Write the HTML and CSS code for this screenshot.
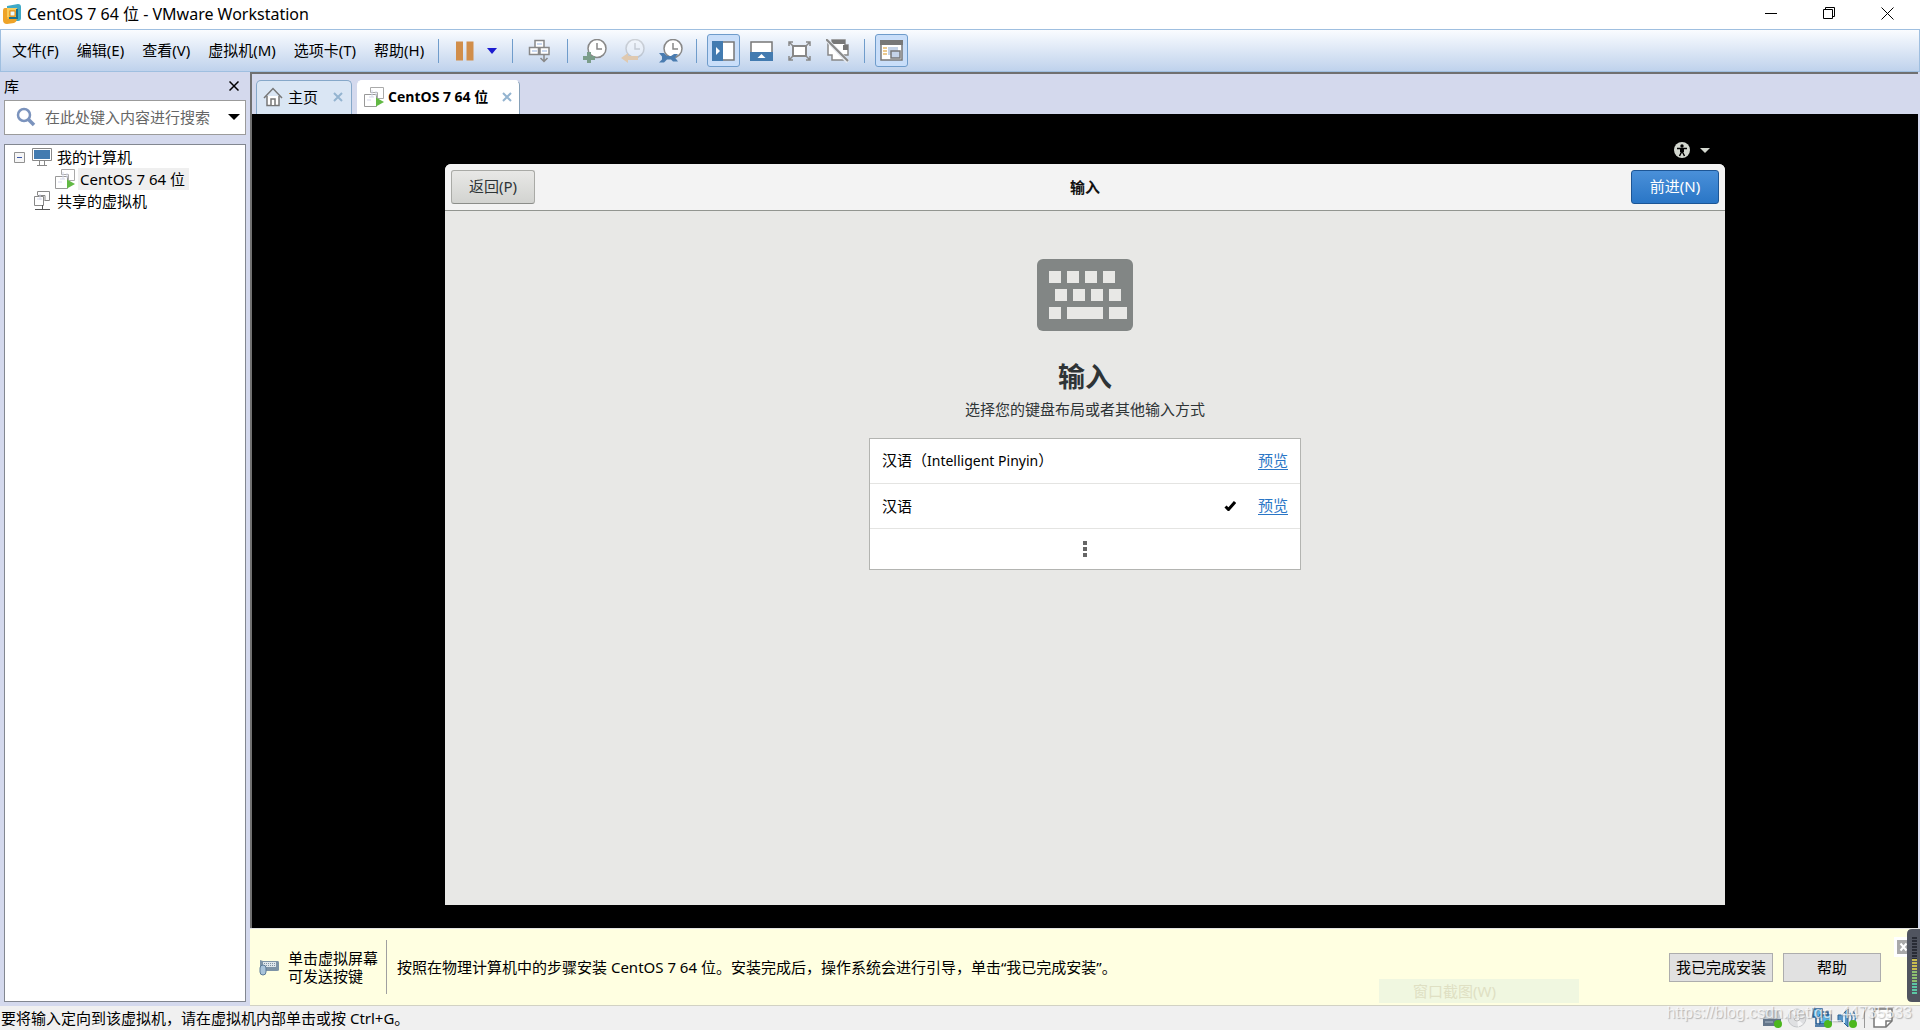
FILE: index.html
```html
<!DOCTYPE html>
<html lang="zh-CN">
<head>
<meta charset="utf-8">
<title>CentOS 7 64 位 - VMware Workstation</title>
<link rel="stylesheet" href="styles.css">
</head>
<body>
<svg width="0" height="0" class="defs" aria-hidden="true">
  <symbol id="vm-on" viewBox="0 0 20 20">
    <path d="M6.500 5.500v-5h13v11h-6" fill="#fff" stroke="#aaa"/>
    <path d="M.5 7.500h12v12H.5z" fill="#fff" stroke="#999"/>
    <path d="M6.500 5.500h7v6" fill="none" stroke="#aaa"/>
    <path d="M5 10h5M8 3v7M12 4v5M3 13h4" stroke="#d5d8ea" fill="none"/>
    <path d="M12 10.500l8 4.500-8 4.500z" fill="#62b944"/>
  </symbol>
  <symbol id="clock" viewBox="0 0 24 24">
    <circle cx="14" cy="9.500" r="9" fill="#fff" stroke="#888" stroke-width="1.500"/>
    <path d="M14 4v6h5" fill="none" stroke="#888" stroke-width="1.500"/>
  </symbol>
</svg>

<header class="titlebar">
  <svg class="logo" width="18" height="20" viewBox="0 0 18 20">
    <path d="M4 2l11-2q3 0 3 3v11q0 3-3 3H4z" fill="#3fa9c6"/>
    <path d="M2 4h3v10h9q0 4-3 5l-7 1q-4 0-4-4V7q0-3 2-3z" fill="#eea328"/>
    <path d="M4 4h10v11H4z" fill="#f5b63f"/>
    <path d="M5 13V5h9" fill="none" stroke="#f9cd5d" stroke-width="2"/>
    <path d="M14 5v9H6" fill="none" stroke="#19708f" stroke-width="2"/>
    <path d="M7 7h5v5H7z" fill="#e9fbff" stroke="#e18a18"/>
  </svg>
  <h1>CentOS 7 64 位 - VMware Workstation</h1>
  <div class="window-buttons">
    <button type="button" aria-label="最小化"><svg width="13" height="13"><path d="M0 6.500h12" stroke="#000"/></svg></button>
    <button type="button" aria-label="还原"><svg width="13" height="13" fill="none" stroke="#000"><path d="M.5 2.500h9v9h-9zM2.500 2.500v-2h9v9h-2"/></svg></button>
    <button type="button" aria-label="关闭"><svg width="13" height="13"><path d="M.5 .5l12 12M12.500 .5l-12 12" stroke="#000"/></svg></button>
  </div>
</header>

<nav class="menubar">
  <div class="menus">
    <button type="button">文件(F)</button>
    <button type="button">编辑(E)</button>
    <button type="button">查看(V)</button>
    <button type="button">虚拟机(M)</button>
    <button type="button">选项卡(T)</button>
    <button type="button">帮助(H)</button>
  </div>
  <div class="tools power">
    <button type="button" aria-label="挂起"><svg width="18" height="20"><path d="M0 .5h7v19H0zM10.500 .5h7v19h-7z" fill="#d18e4a"/></svg></button>
    <button type="button" aria-label="电源选项"><svg width="10" height="6"><path d="M0 0h10L5 6z" fill="#1b1bd0"/></svg></button>
  </div>
  <div class="tools">
    <button type="button" aria-label="发送按键"><svg width="24" height="24" viewBox="0 0 24 24" stroke="#888" stroke-width="1.500" fill="#fff"><path d="M7 1.500h9v7H7zM1.500 8.500h9v7h-9zM12 8.500h9v7h-9z"/><path d="M9 5h5M4 12h5M14 12h5" stroke="#b9cdec"/><path d="M16 15v7M12.500 19l3.500 3.500 3.500-3.500" fill="none"/></svg></button>
  </div>
  <div class="tools snap">
    <button type="button" aria-label="拍摄快照"><svg width="24" height="24"><use href="#clock"/><path d="M4 13h4v4h4v4H8v4H4v-4H0v-4h4z" fill="#7b9d8a"/></svg></button>
    <button type="button" aria-label="恢复快照"><svg width="24" height="24"><use href="#clock" opacity=".3"/><path d="M0 19l7-5v3h10v4H7v3z" fill="#dfc9b0"/></svg></button>
    <button type="button" aria-label="管理快照"><svg width="24" height="24"><use href="#clock"/><path d="M0 14h5l3 3h4l3-2h4l-3 3.500 3 4h-5l-2-2H8l-3 3H0l3-3v-3z" fill="#4a7cb0"/></svg></button>
  </div>
  <div class="tools view">
    <button type="button" class="pressed" aria-label="显示库"><svg width="24" height="20"><path d="M1 1h21v18H1z" fill="#fff" stroke="#777" stroke-width="1.500"/><path d="M0 0h11v20H0z" fill="#437bb0"/><path d="M4 6l4 4-4 4z" fill="#fff"/></svg></button>
    <button type="button" aria-label="显示缩略图"><svg width="24" height="20"><path d="M1 1h21v18H1z" fill="#fff" stroke="#777" stroke-width="1.500"/><path d="M0 11h23v9H0z" fill="#437bb0"/><path d="M7.500 17l4-4 4 4z" fill="#fff"/></svg></button>
    <button type="button" aria-label="全屏"><svg width="24" height="20" fill="none" stroke="#888" stroke-width="1.500"><path d="M5 5h13v10H5z" fill="#fff" stroke-width="2"/><path d="M1 5V1h4M18 1h4v4M22 15v4h-4M5 19H1v-4M1 1l4 4M22 1l-4 4M22 19l-4-4M1 19l4-4"/></svg></button>
    <button type="button" aria-label="Unity"><svg width="24" height="24"><path d="M6 1h13v5h3v10h-4v5H6V16H2V4h4z" fill="#fff" stroke="#888" stroke-width="1.500"/><path d="M6 1h13v4H6zM17 6h5v5h-5z" fill="#777"/><path d="M1 1l21 22" stroke="#e5e9ef" stroke-width="4"/><path d="M0 0l22 22" stroke="#888" stroke-width="2"/></svg></button>
  </div>
  <div class="tools">
    <button type="button" class="pressed" aria-label="控制台视图"><svg width="24" height="22"><path d="M1 1h21v19H1z" fill="#fff" stroke="#777" stroke-width="1.500"/><path d="M0 0h23v5H0z" fill="#777"/><path d="M3 8h4M3 11h4M3 14h4" stroke="#e6b96b" stroke-width="1.500"/><path d="M8 7h10v8H8z" fill="#c5d3e8"/><path d="M11 11h9v7h-9z" fill="#c5d3e8" stroke="#777" stroke-width="1.500"/></svg></button>
  </div>
</nav>

<main class="workspace">
  <aside class="library">
    <div class="library-head">
      <h2>库</h2>
      <button type="button" aria-label="关闭库"><svg width="10" height="10"><path d="M.5 .5l9 9M9.500 .5l-9 9" stroke="#000" stroke-width="1.500"/></svg></button>
    </div>
    <label class="search">
      <svg width="20" height="20" fill="none"><circle cx="8" cy="8" r="6" stroke="#7b93bd" stroke-width="2.500"/><path d="M12 12l6 6" stroke="#7b93bd" stroke-width="3.500"/></svg>
      <input type="text" placeholder="在此处键入内容进行搜索" aria-label="搜索">
      <svg width="12" height="6"><path d="M0 0h12L6 6z" fill="#000"/></svg>
    </label>
    <ul class="tree">
      <li>
        <button type="button" class="twisty" aria-label="折叠"><svg width="11" height="11"><path d="M.5 .5h10v10H.5z" fill="#f6f6f6" stroke="#919191"/><path d="M3 5.500h5" stroke="#3b56a8"/></svg></button>
        <svg width="20" height="20"><path d="M.5 1.500h19v12H.5z" fill="#fff" stroke="#888"/><path d="M2 3h16v9H2z" fill="#437bb0"/><path d="M7.500 14v4M12.500 14v4M5 18.500h10" stroke="#888"/></svg>
        <span>我的计算机</span>
      </li>
      <li class="child">
        <svg width="20" height="20"><use href="#vm-on"/></svg>
        <span class="selected">CentOS 7 64 位</span>
      </li>
      <li class="shared">
        <svg width="20" height="20" fill="none"><path d="M5.500 4.500v-4h12v9h-5M2.500 5.500h9v9h-9zM6 4.500h7v5" stroke="#888"/><path d="M5 8h5M8 3v6" stroke="#d5d8ea"/><path d="M10.500 14v4M3 18.500h15" stroke="#555"/></svg>
        <span>共享的虚拟机</span>
      </li>
    </ul>
  </aside>

  <section class="console">
    <div class="tabs">
      <div class="tab">
        <svg width="20" height="20" fill="#fff" stroke="#777" stroke-width="1.500"><path d="M4 9v9.500h12V9"/><path d="M1 11l9-9.500 9 9.500" fill="none"/><path d="M8 18v-6h4v6"/></svg>
        <button type="button">主页</button>
        <button type="button" class="x" aria-label="关闭主页"><svg width="10" height="10"><path d="M1 1l8 8M9 1L1 9" stroke="#94b4d0" stroke-width="2"/></svg></button>
      </div>
      <div class="tab active">
        <svg width="20" height="20"><use href="#vm-on"/></svg>
        <button type="button">CentOS 7 64 位</button>
        <button type="button" class="x" aria-label="关闭虚拟机"><svg width="10" height="10"><path d="M1 1l8 8M9 1L1 9" stroke="#94b4d0" stroke-width="2"/></svg></button>
      </div>
    </div>

    <div class="screen">
      <div class="guest">
        <div class="guest-panel">
          <svg width="16" height="16"><circle cx="8" cy="8" r="8" fill="#d3d7cf"/><circle cx="8" cy="4" r="1.700" fill="#000"/><path d="M3 6.500h10M8 6v4M8 9l-2.500 5M8 9l2.500 5" stroke="#000" stroke-width="1.500"/><path d="M6 6h4v4H6z" fill="#000"/></svg>
          <svg width="10" height="5"><path d="M0 0h10L5 5z" fill="#d3d7cf"/></svg>
        </div>
        <div class="setup">
          <div class="setup-head">
            <button type="button" class="gtk">返回(P)</button>
            <h2>输入</h2>
            <button type="button" class="gtk primary">前进(N)</button>
          </div>
          <div class="setup-body">
            <svg width="96" height="72"><rect width="96" height="72" rx="6" fill="#828685"/><path d="M12 12h12v12H12zM30 12h12v12H30zM48 12h12v12H48zM66 12h12v12H66zM18 30h12v12H18zM36 30h12v12H36zM54 30h12v12H54zM72 30h12v12H72zM12 48h12v12H12zM30 48h36v12H30zM72 48h18v12H72z" fill="#e8e8e6"/></svg>
            <h3>输入</h3>
            <p>选择您的键盘布局或者其他输入方式</p>
            <ul class="layouts">
              <li><span class="name">汉语（<span class="latin">Intelligent Pinyin</span>）</span><a href="#">预览</a></li>
              <li><span class="name">汉语</span><svg width="12" height="10"><path d="M1.500 5.500l3 3L11 1" fill="none" stroke="#000" stroke-width="3"/></svg><a href="#">预览</a></li>
              <li class="more"><button type="button" aria-label="更多"><svg width="4" height="16"><path d="M0 0h4v4H0zM0 6h4v4H0zM0 12h4v4H0z" fill="#666"/></svg></button></li>
            </ul>
          </div>
        </div>
      </div>
    </div>

    <div class="hint">
      <svg width="20" height="18"><path d="M1 2l3 1h15q1 0 1 2v7q0 1-2 1H5L1 10z" fill="#7d93a6"/><path d="M4 4h13v5H4z" fill="#dfe7ec"/><path d="M5 5.500h11M5 7.500h11" stroke="#8193a3" stroke-dasharray="1 1"/><rect x="1" y="7" width="6" height="10" rx="3" fill="#a8c3da" stroke="#5b7b98"/></svg>
      <p class="keys">单击虚拟屏幕<br>可发送按键</p>
      <p class="steps">按照在物理计算机中的步骤安装 CentOS 7 64 位。安装完成后，操作系统会进行引导，单击“我已完成安装”。</p>
      <button type="button" class="win done">我已完成安装</button>
      <button type="button" class="win help">帮助</button>
      <button type="button" class="dismiss" aria-label="关闭提示"><svg width="14" height="14"><path d="M0 0h14v14H0z" fill="#a9a9a9"/><path d="M3.500 3.500l6 7M9.500 3.500l-6 7" stroke="#fff" stroke-width="2"/></svg></button>
      <span class="ghost">窗口截图(W)</span>
      <svg class="meter" width="13" height="73"><path d="M13 0H5Q0 0 0 5v63q0 5 5 5h8z" fill="#50545f"/><path d="M7.500 8v22" stroke="#292c35" stroke-width="5" stroke-dasharray="2 1"/><path d="M7.500 30v12" stroke="#c8bd4f" stroke-width="5" stroke-dasharray="2 1"/><path d="M7.500 42v12" stroke="#8dbf70" stroke-width="5" stroke-dasharray="2 1"/><path d="M7.500 54v11" stroke="#5bc7a4" stroke-width="5" stroke-dasharray="2 1"/></svg>
    </div>
  </section>
</main>

<footer class="status">
  <p>要将输入定向到该虚拟机，请在虚拟机内部单击或按 Ctrl+G。</p>
  <div class="devices">
    <svg width="20" height="20"><path d="M4 2h12l3 9H1z" fill="#c4cdd4"/><path d="M1 11h18v7H1z" fill="#63758a"/><path d="M3 14h8" stroke="#aebdca"/><circle cx="16" cy="16" r="4" fill="#4cb71e"/></svg>
    <svg width="20" height="20"><circle cx="10" cy="10" r="9" fill="#dfe0e2" stroke="#c4c6c9"/><path d="M10 10L4 4l5-3zM10 10l6 6-5 3z" fill="#f5f5f6"/><circle cx="10" cy="10" r="3" fill="#eee" stroke="#bbb"/></svg>
    <svg width="20" height="20"><path d="M1 1h9v8H1zM8 7h11v9H8z" fill="#5ab5ea" stroke="#215a91" stroke-width="1.500"/><path d="M4 9v7h4M10 4h6v3M3 18h10" fill="none" stroke="#215a91" stroke-width="1.500"/><circle cx="16" cy="16" r="4" fill="#4cb71e"/></svg>
    <svg width="20" height="20"><path d="M1 7h4l6-6v18l-6-6H1z" fill="#5795c8" stroke="#29618f"/><path d="M7 5v10" stroke="#d5ebfa" stroke-width="2"/><path d="M13 5q4 5 0 10M16 3q5 7 0 14" fill="none" stroke="#4e86b7" stroke-width="1.500"/><circle cx="16" cy="16" r="4" fill="#4cb71e"/></svg>
    <svg class="note" width="20" height="20"><path d="M1 1h18v12l-6 6H1z" fill="#fff" stroke="#777" stroke-width="1.500"/><path d="M19 13h-6v6" fill="none" stroke="#777" stroke-width="1.500"/></svg>
  </div>
  <span class="watermark">https://blog.csdn.net/qq_44735533</span>
</footer>
</body>
</html>
```
FILE: styles.css
```css
* { box-sizing: border-box; }
html, body { height: 100%; }
body {
  margin: 0;
  display: flex;
  flex-direction: column;
  overflow: hidden;
  font: 15px/18px "Noto Sans", "Noto Sans CJK SC", sans-serif;
  color: #000;
  background: #d4d9ed;
}
h1, h2, h3, p, ul { margin: 0; padding: 0; font-size: inherit; font-weight: normal; }
ul { list-style: none; }
button { margin: 0; padding: 0; border: 0; background: none; font: inherit; color: inherit; }
svg { display: block; flex: none; }
.defs { position: absolute; }

.titlebar { display: flex; align-items: center; height: 29px; flex: none; padding: 0 4px 2px 3px; gap: 6px; background: #fff; }
.titlebar h1 { flex: 1; font-size: 16px; }
.window-buttons { display: flex; }
.window-buttons button { width: 58px; height: 26px; display: grid; place-items: center; }

.menubar {
  display: flex;
  align-items: center;
  flex: none;
  height: 43px;
  padding-left: 11px;
  border: 1px solid #9fbfe0;
  background: linear-gradient(#fafcff, #bfd2ec);
}
.menus { display: flex; gap: 18px; margin-right: 14px; padding-bottom: 2px; white-space: nowrap; }
.tools { display: flex; align-items: center; height: 24px; border-left: 1px solid #6f9ccb; padding: 0 15px; gap: 14px; }
.tools.power { padding: 0 15px 0 17px; gap: 13px; }
.tools.snap { padding-right: 13px; }
.tools.view { gap: 14px; padding: 0 14px 0 10px; }
.tools:last-child { padding-left: 10px; }
.tools button { display: grid; place-items: center; }
.tools .pressed { width: 33px; height: 33px; margin-right: -4px; border: 1px solid #6f9ccb; border-radius: 3px; background: #c9def9; }

.workspace { flex: 1; min-height: 0; display: flex; }
.library { width: 250px; flex: none; display: flex; flex-direction: column; padding: 2px 4px 4px; }
.library-head { display: flex; align-items: center; justify-content: space-between; height: 26px; padding: 0 7px 2px 0; }
.search { display: flex; align-items: center; height: 35px; flex: none; padding: 0 5px 2px 11px; gap: 8px; border: 1px solid #9b9b9b; background: #fff; }
.search input { flex: 1; min-width: 0; padding: 0 0 0 1px; border: 0; outline: 0; font: inherit; white-space: nowrap; }
.search input::placeholder { color: #666; }
.tree { flex: 1; margin-top: 9px; padding: 1px 9px; border: 1px solid #828790; background: #fff; }
.tree li { display: flex; align-items: center; height: 22px; gap: 5px; }
.tree .twisty { margin-right: 2px; }
.tree .child { padding-left: 41px; gap: 3px; }
.tree .shared { padding-left: 18px; }
.tree .selected { background: #efefef; padding: 2px 4px 2px 2px; }

.console { flex: 1; min-width: 0; display: flex; flex-direction: column; }
.tabs { display: flex; gap: 5px; height: 42px; flex: none; padding: 6px 0 0 4px; margin-right: 2px; border-top: 2px solid #707070; border-left: 2px solid #707070; }
.tab { display: flex; align-items: center; gap: 5px; padding: 0 8px 2px 6px; border: 1px solid #86a8c9; border-bottom: 0; border-radius: 5px 5px 0 0; background: #dae6f4; white-space: nowrap; }
.tab .x { margin-left: 10px; }
.tab.active { background: #fff; border-color: #fff #86a0b8 #fff #fff; gap: 4px; padding-right: 7px; font-family: "Open Sans", "Noto Sans CJK SC", sans-serif; font-size: 14px; font-weight: bold; }

.screen { flex: 1; min-height: 0; margin-right: 2px; padding-bottom: 23px; display: flex; justify-content: center; background: #000; border-left: 2px solid #707070; }
.guest { width: 100%; max-width: 1280px; display: flex; flex-direction: column; }
.guest-panel { height: 50px; flex: none; display: flex; align-items: center; justify-content: flex-end; gap: 10px; padding: 22px 15px 0 0; }
.setup { flex: 1; min-height: 0; display: flex; flex-direction: column; border-radius: 6px 6px 0 0; overflow: hidden; background: #e8e8e6; color: #2e3436; }
.setup-head { display: grid; grid-template-columns: 88px 1fr 88px; align-items: center; height: 47px; flex: none; padding: 0 6px 1px; border-bottom: 1px solid #929590; background: #f3f3f3; }
.setup-head h2 { font-weight: bold; color: #111; text-align: center; }
.gtk { width: 84px; height: 34px; padding-bottom: 1px; border: 1px solid #a9aaa6; border-bottom-color: #8b8d89; border-radius: 3px; background: linear-gradient(#e8e8e6, #d2d3d0); }
.gtk.primary { width: 88px; color: #fff; border-color: #1c5595; background: linear-gradient(#4a90d9, #2a76c6); }
.setup-body { flex: 1; padding: 48px 24px 0; display: flex; flex-direction: column; align-items: center; }
.setup-body h3 { margin-top: 28px; font-size: 27px; line-height: 36px; font-weight: bold; }
.setup-body p { margin-top: 5px; }
.layouts { width: 100%; max-width: 432px; margin-top: 20px; border: 1px solid #b3b4b1; background: #fff; color: #000; }
.layouts li { display: flex; align-items: center; height: 45px; padding: 0 12px 1px; gap: 22px; border-bottom: 1px solid #e4e4e2; }
.layouts .name { flex: 1; }
.layouts .latin { font-size: 14px; }
.layouts a { color: #2a76c6; text-decoration: none; border-bottom: 1px solid #2a76c6; }
.layouts .more { height: 40px; justify-content: center; border: 0; }

.hint { position: relative; display: flex; align-items: center; height: 78px; flex: none; padding: 0 93px 0 9px; border-top: 1px solid #e4e4e4; border-bottom: 1px solid #d2d2c4; background: #ffffe1; }
.hint .keys { padding: 9px 8px 9px 0; margin: 0 10px 0 9px; border-right: 1px solid #a0a0a0; white-space: nowrap; }
.hint .steps { flex: 1; white-space: nowrap; overflow: hidden; }
.win { height: 29px; border: 1px solid #adadad; background: #e1e1e1; white-space: nowrap; }
.done { width: 104px; margin-right: 10px; }
.help { width: 98px; margin-right: -54px; }
.dismiss { position: absolute; right: 6px; top: 8px; padding: 3px; background: #fff; }
.meter { position: absolute; right: 0; top: 0; }
.ghost { position: absolute; right: 341px; bottom: 2px; width: 200px; height: 24px; padding-left: 34px; line-height: 24px; color: #dfe0c3; background: #f0f7e0; }

.status { position: relative; display: flex; align-items: center; justify-content: space-between; height: 24px; flex: none; padding: 0 27px 0 1px; background: #f0f0f0; }
.devices { display: flex; gap: 5px; }
.devices .note { box-sizing: content-box; margin-left: 2px; padding-left: 8px; border-left: 1px solid #999; }
.watermark { position: absolute; right: 8px; top: -3px; font: 16px/20px "Liberation Sans", sans-serif; color: rgba(255, 255, 255, .7); text-shadow: 1px 1px 1px rgba(120, 120, 120, .5); }
```
